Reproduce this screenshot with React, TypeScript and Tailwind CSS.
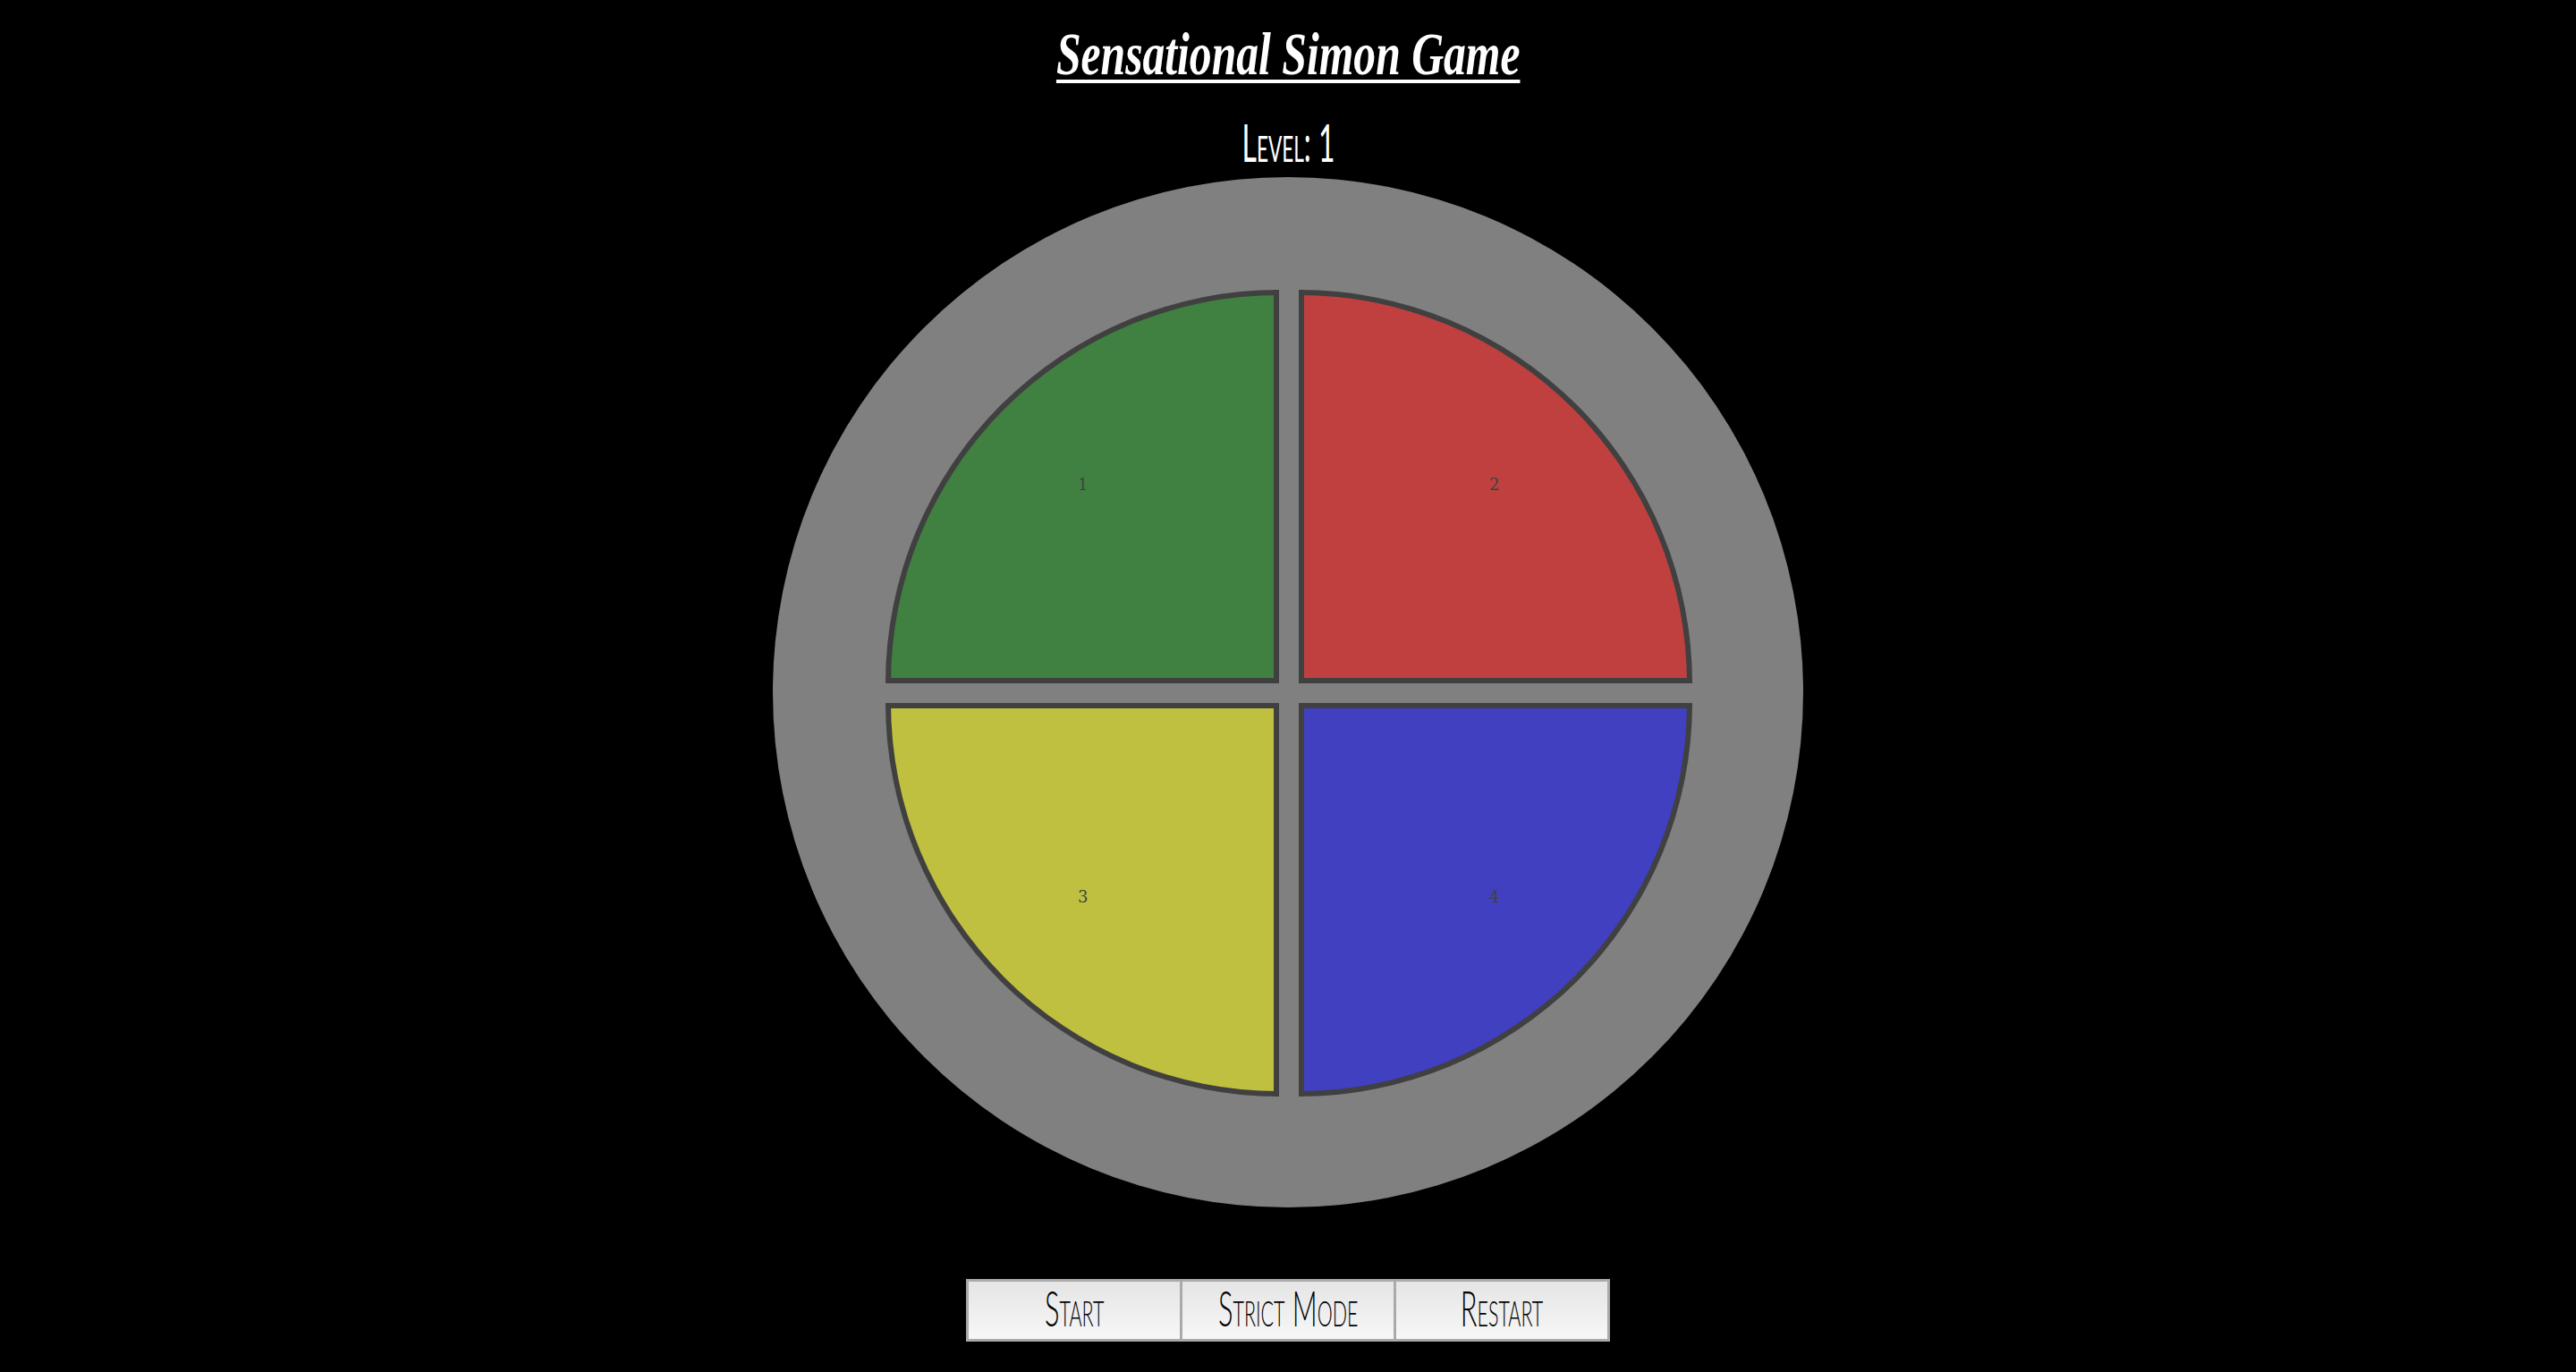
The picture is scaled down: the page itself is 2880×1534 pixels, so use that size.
import React from 'react';

const pads = [
  { id: 1, className: 'rounded-tl-full bg-[#408040] pt-[202px] pl-[209px]' },
  { id: 2, className: 'rounded-tr-full bg-[#c04040] pt-[202px] pl-[207px]' },
  { id: 3, className: 'rounded-bl-full bg-[#c0c040] pt-[201px] pl-[209px]' },
  { id: 4, className: 'rounded-br-full bg-[#4040c0] pt-[201px] pl-[207px]' },
];

const labels = ['Start', 'Strict Mode', 'Restart'];

const handFont = "font-['Lato','Liberation_Sans',sans-serif] [font-variant:small-caps]";

export default function App() {
  return (
    <div className="min-h-[1534px] bg-black flex flex-col items-center overflow-hidden">
      <h1 className="mt-[25px] h-[70px] inline-block scale-x-[0.73] whitespace-nowrap font-['Liberation_Serif',serif] italic font-bold text-[68px] leading-[70px] text-white underline decoration-[4px] underline-offset-[6px]">
        Sensational Simon Game
      </h1>

      <div className={`mt-[29px] mb-[4px] h-[70px] inline-block scale-x-[0.55] font-normal text-white text-[58px] leading-[70px] ${handFont}`}>
        Level: 1
      </div>

      <div className="w-[1152px] h-[1152px] pl-[2px] pt-[2px] rounded-full bg-[#808080] grid grid-cols-[440px_440px] grid-rows-[440px_440px] gap-[22px] place-content-center">
        {pads.map((pad) => (
          <div key={pad.id} className={`border-[6px] border-[#404040] text-[18px] leading-[20px] text-[#404040] font-['DejaVu_Serif',serif] ${pad.className}`}>
            {pad.id}
          </div>
        ))}
      </div>

      <div className="mt-[80px] flex">
        {labels.map((label) => (
          <button
            key={label}
            className="w-[242px] h-[70px] border-[3px] border-[#aaaaaa] not-first:-ml-[3px] bg-linear-to-b from-[#e5e5e5] to-[#f7f7f7] flex items-center justify-center"
          >
            <span className={`inline-block -translate-y-[3px] scale-x-[0.55] font-light text-black text-[56px] leading-[60px] whitespace-nowrap ${handFont}`}>
              {label}
            </span>
          </button>
        ))}
      </div>
    </div>
  );
}
